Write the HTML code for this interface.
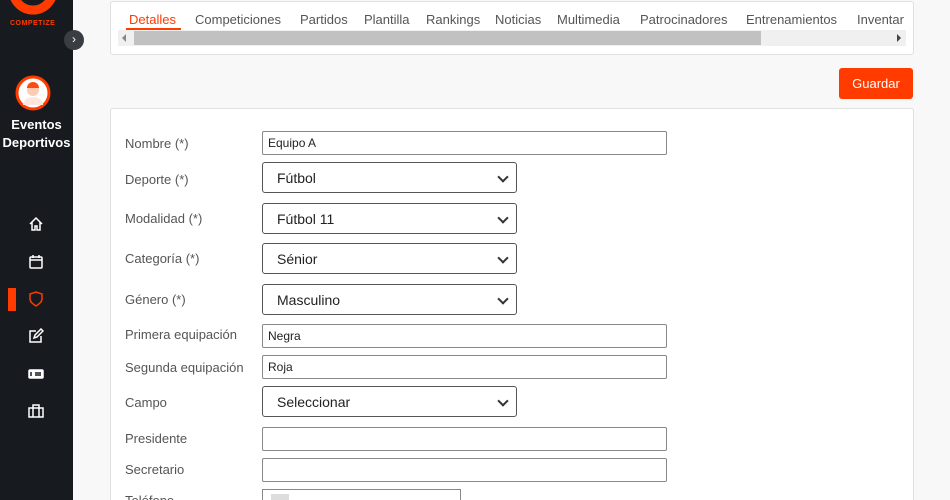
<!DOCTYPE html><html><head><meta charset="utf-8"><style>
html,body{margin:0;width:950px;height:500px;overflow:hidden}
body{background:#f8f8f8;font-family:"Liberation Sans",sans-serif;position:relative}
.sb{position:absolute;left:0;top:0;width:73px;height:500px;background:#171b1f}
.a{position:absolute}
.card{position:absolute;left:110px;width:802px;background:#fff;border:1px solid #e0e0e0;border-radius:3px}
.tabs span{position:absolute;top:10px;font-size:13px;color:#555}
.lbl{position:absolute;left:125px;font-size:13px;color:#555}
.in{position:absolute;left:262px;height:22px;border:1px solid #888;border-radius:2px;background:#fff;font-size:12px;line-height:22px;padding-left:5px;width:398px;color:#222}
.sel{position:absolute;left:262px;width:255px;height:31px;border:1px solid #555;border-radius:3px;background:#fff;font-size:14px;line-height:31px;padding-left:14px;box-sizing:border-box;color:#222}
.sel:after{content:"";position:absolute;right:9px;top:10px;width:6px;height:6px;border-right:2px solid #333;border-bottom:2px solid #333;transform:rotate(45deg)}
svg.i{position:absolute;left:28px;width:16px;height:16px;fill:none;stroke:#fff;stroke-width:1.5}
</style></head><body>
<div class="sb">
<svg class="a" style="left:8px;top:-20px" width="50" height="36"><circle cx="25" cy="10" r="20" fill="none" stroke="#ff3b00" stroke-width="9"/></svg>
<div class="a" style="left:10px;top:20px;font-size:7px;font-weight:bold;color:#ff3b00;letter-spacing:.5px">COMPETIZE</div>
<svg class="a" style="left:15px;top:75px" width="36" height="36"><circle cx="18" cy="18" r="16" fill="#fff" stroke="#ff3b00" stroke-width="3"/><circle cx="18" cy="15" r="6" fill="#ffcbb5"/><path d="M12 13a6 6 0 0 1 12 0" fill="#ff4a10"/><path d="M8 30a10 8 0 0 1 20 0" fill="#ffe6dc"/></svg>
<div class="a" style="left:0;width:73px;top:116px;text-align:center;color:#fff;font-weight:bold;font-size:13px;line-height:18px">Eventos<br>Deportivos</div>
<svg class="i" style="top:216px" viewBox="0 0 16 16"><path d="M2 8L8 2l6 6M4 6v8h3v-4h2v4h3V6"/></svg>
<svg class="i" style="top:254px" viewBox="0 0 16 16"><rect x="2" y="3" width="12" height="11" rx="1"/><path d="M2 6h12M5 1v3M11 1v3"/></svg>
<div class="a" style="left:8px;top:288px;width:8px;height:23px;background:#ff3b00"></div>
<svg class="i" style="top:291px;stroke:#ff3b00" viewBox="0 0 16 16"><path d="M2 3l6-2 6 2v5c0 3-3 5-6 7-3-2-6-4-6-7z"/></svg>
<svg class="i" style="top:328px" viewBox="0 0 16 16"><path d="M8 3H2v11h11V8M6 10l1-3 6-6 2 2-6 6z"/></svg>
<svg class="i" style="top:366px" viewBox="0 0 16 16"><rect x="1" y="4" width="14" height="8" rx="1" fill="#fff"/><path d="M7 7h6M7 9h6M3 6v4" stroke="#171b1f"/></svg>
<svg class="i" style="top:403px" viewBox="0 0 16 16"><rect x="1" y="5" width="14" height="9"/><path d="M5 5V2h6v3M5 5v9M11 5v9"/></svg>
</div>
<div class="a" style="left:64px;top:30px;width:20px;height:20px;border-radius:50%;background:#3a3d41;color:#fff;font-size:12px;text-align:center;line-height:19px">›</div>
<div class="card tabs" style="top:1px;height:52px">
<span style="left:18px;color:#ff3b00">Detalles</span><div class="a" style="left:15px;top:26px;width:55px;height:2px;background:#ff3b00"></div>
<span style="left:84px">Competiciones</span><span style="left:189px">Partidos</span><span style="left:253px">Plantilla</span><span style="left:315px">Rankings</span><span style="left:384px">Noticias</span><span style="left:446px">Multimedia</span><span style="left:529px">Patrocinadores</span><span style="left:635px">Entrenamientos</span><span style="left:746px">Inventar</span>
<div class="a" style="left:7px;top:28px;width:788px;height:16px;background:#f0f0f0"></div>
<div class="a" style="left:23px;top:29px;width:627px;height:14px;background:#c1c1c1"></div>
<div class="a" style="left:11px;top:32px;border:4px solid transparent;border-right-color:#888;border-left:0"></div>
<div class="a" style="left:786px;top:32px;border:4px solid transparent;border-left-color:#444;border-right:0"></div>
</div>
<div class="a" style="left:839px;top:68px;width:74px;height:31px;background:#ff3b00;border-radius:3px;color:#fff;font-size:13px;text-align:center;line-height:31px">Guardar</div>
<div class="card" style="top:108px;height:400px"></div>
<div class="lbl" style="top:136px">Nombre (*)</div><div class="in" style="top:131px">Equipo A</div>
<div class="lbl" style="top:172px">Deporte (*)</div><div class="sel" style="top:162px">Fútbol</div>
<div class="lbl" style="top:211px">Modalidad (*)</div><div class="sel" style="top:203px">Fútbol 11</div>
<div class="lbl" style="top:251px">Categoría (*)</div><div class="sel" style="top:243px">Sénior</div>
<div class="lbl" style="top:292px">Género (*)</div><div class="sel" style="top:284px">Masculino</div>
<div class="lbl" style="top:327px">Primera equipación</div><div class="in" style="top:324px">Negra</div>
<div class="lbl" style="top:360px">Segunda equipación</div><div class="in" style="top:355px">Roja</div>
<div class="lbl" style="top:395px">Campo</div><div class="sel" style="top:386px">Seleccionar</div>
<div class="lbl" style="top:431px">Presidente</div><div class="in" style="top:427px"></div>
<div class="lbl" style="top:462px">Secretario</div><div class="in" style="top:458px"></div>
<div class="lbl" style="top:493px">Teléfono</div><div class="a" style="left:262px;top:489px;width:197px;height:20px;border:1px solid #888;background:#fff"><div class="a" style="left:8px;top:4px;width:18px;height:14px;background:#ddd"></div></div>
</body></html>
